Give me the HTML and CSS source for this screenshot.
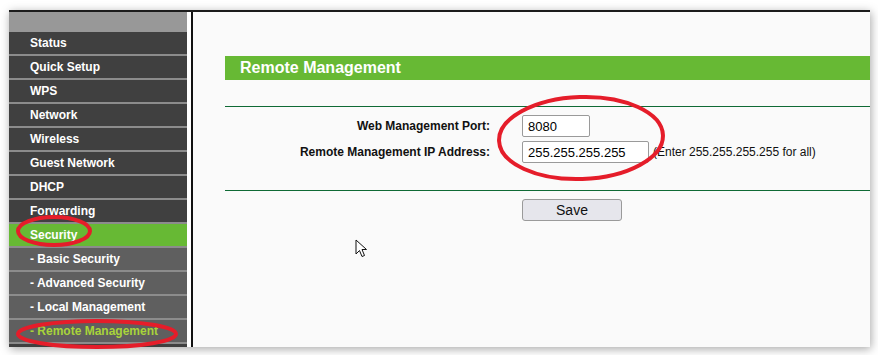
FILE: index.html
```html
<!DOCTYPE html>
<html lang="en">

<head>
    <meta charset="UTF-8">
    <title>Remote Management</title>
    <link rel="stylesheet" href="styles.css">
</head>

<body>
    <div class="shot">
        <nav class="menu">
            <div class="menu__top"></div>
            <a class="menu__item">Status</a>
            <a class="menu__item">Quick Setup</a>
            <a class="menu__item">WPS</a>
            <a class="menu__item">Network</a>
            <a class="menu__item">Wireless</a>
            <a class="menu__item">Guest Network</a>
            <a class="menu__item">DHCP</a>
            <a class="menu__item">Forwarding</a>
            <a class="menu__item menu__item--active">Security</a>
            <a class="menu__item menu__item--sub">- Basic Security</a>
            <a class="menu__item menu__item--sub">- Advanced Security</a>
            <a class="menu__item menu__item--sub">- Local Management</a>
            <a class="menu__item menu__item--sub menu__item--current">- Remote Management</a>
        </nav>
        <main class="content">
            <h1 class="content__title">Remote Management</h1>
            <form class="form">
                <div class="form__fields">
                    <label class="form__label">Web Management Port:</label>
                    <div class="form__value"><input class="form__input form__input--port" value="8080"></div>
                    <label class="form__label">Remote Management IP Address:</label>
                    <div class="form__value">
                        <input class="form__input form__input--ip" value="255.255.255.255">
                        <span class="form__hint">(Enter 255.255.255.255 for all)</span>
                    </div>
                </div>
                <div class="form__actions">
                    <button type="button" class="form__button">Save</button>
                </div>
            </form>
        </main>
    </div>

    <svg class="marks" width="878" height="355" viewBox="0 0 878 355">
        <ellipse cx="581" cy="138" rx="82" ry="41" transform="rotate(-2 581 138)" />
        <ellipse cx="54" cy="231" rx="36" ry="14" />
        <ellipse cx="97" cy="334" rx="79" ry="13" />
    </svg>

    <svg class="cursor" width="14" height="20" viewBox="0 0 14 20">
        <path d="M1 1 L1 15 L4.5 11.5 L7 17.5 L9.5 16.5 L7 10.5 L11.5 10.5 Z" />
    </svg>
</body>

</html>
```

FILE: styles.css
```css
body {
    margin: 0;
    background-color: #fff;
    width: 878px;
    height: 355px;
    overflow: hidden;
    position: relative;
    font-family: 'Liberation Sans', Arial, sans-serif;
}

.shot {
    margin: 10px 0 0 9px;
    width: 861px;
    height: 335px;
    border-top: 2px solid #1c1c1c;
    display: flex;
    box-shadow: 1px 2px 9px rgba(0, 0, 0, 0.35);
    background-color: #fafafa;
}

.menu {
    width: 178px;
    background-color: #404040;
    border-right: 4px solid #fff;
    display: flex;
    flex-direction: column;
}

.menu__top {
    height: 20px;
    background-color: #989898;
}

.menu__item {
    display: block;
    height: 22px;
    line-height: 22px;
    border-bottom: 2px solid #8c8c8c;
    padding-left: 21px;
    color: #fff;
    font-size: 12px;
    font-weight: bold;
    background-color: #404040;
}

.menu__item--active {
    background-color: #67b934;
}

.menu__item--sub {
    background-color: #5f5f5f;
}

.menu__item--current {
    color: #a8d43a;
}

.content {
    flex: 1;
    border-left: 2px solid #111;
    padding: 44px 0 0 32px;
    background-color: #fafafa;
}

.content__title {
    margin: 0;
    height: 24px;
    line-height: 24px;
    padding-left: 15px;
    background-color: #67b934;
    color: #fff;
    font-size: 16px;
    font-weight: bold;
}

.form {
    margin-top: 26px;
}

.form__fields {
    border-top: 1px solid #0f6a35;
    border-bottom: 1px solid #0f6a35;
    display: grid;
    grid-template-columns: 265px 1fr;
    column-gap: 32px;
    row-gap: 4px;
    padding: 8px 0 27px;
}

.form__label {
    text-align: right;
    font-size: 12px;
    font-weight: bold;
    color: #111;
    line-height: 22px;
}

.form__value {
    display: flex;
    align-items: center;
    gap: 4px;
}

.form__input {
    box-sizing: border-box;
    height: 22px;
    border: 1px solid #9a9a9a;
    border-radius: 2px;
    padding: 0 5px;
    font-family: 'Liberation Sans', Arial, sans-serif;
    font-size: 13px;
    color: #000;
    background-color: #fff;
}

.form__input--port {
    width: 68px;
}

.form__input--ip {
    width: 127px;
}

.form__hint {
    font-size: 12px;
    color: #111;
}

.form__actions {
    padding: 8px 0 0 297px;
}

.form__button {
    width: 100px;
    height: 22px;
    border: 1px solid #9a9a9a;
    border-radius: 3px;
    background-color: #e6e6ec;
    font-family: 'Liberation Sans', Arial, sans-serif;
    font-size: 14px;
    color: #111;
    padding: 0;
}

.marks {
    position: absolute;
    top: 0;
    left: 0;
    pointer-events: none;
    fill: none;
    stroke: #e51d2a;
    stroke-width: 4;
}

.cursor {
    position: absolute;
    top: 239px;
    left: 355px;
    fill: #fff;
    stroke: #111;
    stroke-width: 1;
}
```
